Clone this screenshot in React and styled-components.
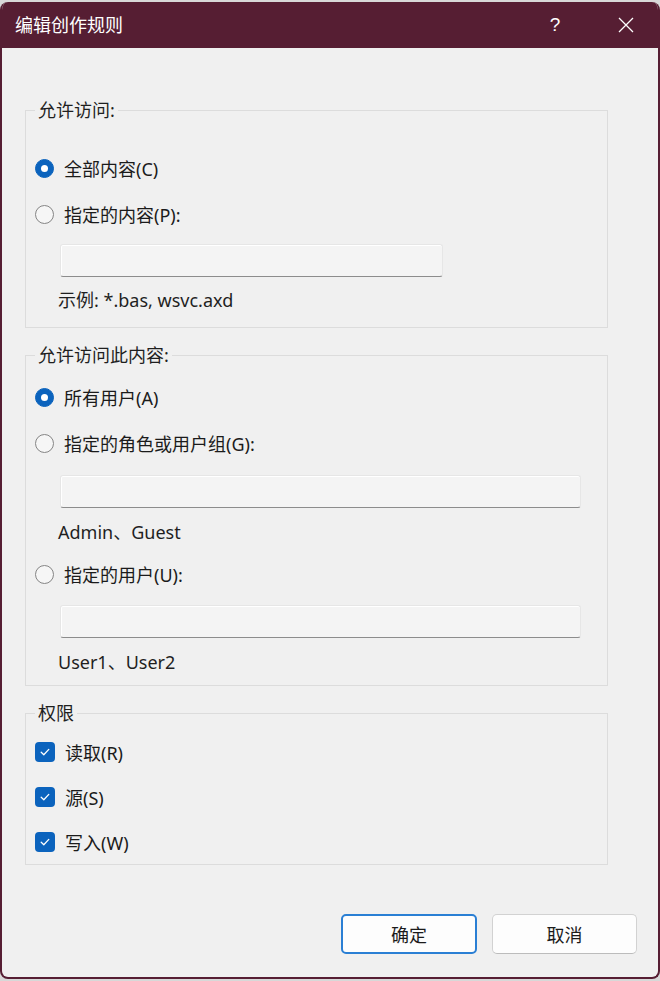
import styled, { createGlobalStyle } from 'styled-components';

const GlobalStyle = createGlobalStyle`
  html, body {
    margin: 0;
    padding: 0;
    background: #d8d8d8;
  }
  body {
    font-family: "Noto Sans", "Noto Sans CJK SC", sans-serif;
    color: #1b1b1b;
  }
`;

const Window = styled.div`
  box-sizing: border-box;
  width: 660px;
  height: 977px;
  margin-top: 2px;
  background: #f0f0f0;
  border: 2px solid #561e33;
  border-top: none;
  border-radius: 8px;
  overflow: hidden;
  display: flex;
  flex-direction: column;
`;

const TitleBar = styled.div`
  height: 46px;
  flex-shrink: 0;
  background: #561e33;
  color: #fff;
  display: flex;
  align-items: center;
  padding-left: 13px;
`;

const Title = styled.div`
  flex: 1;
  font-size: 18px;
  line-height: 24px;
`;

const TitleButton = styled.div`
  width: ${p => p.$w}px;
  height: 46px;
  display: flex;
  align-items: center;
  justify-content: center;
  font-family: "Liberation Sans", sans-serif;
  font-size: 19px;
  font-weight: 300;
`;

const Body = styled.div`
  flex: 1;
  padding: 52px 50px 0 23px;
  display: flex;
  flex-direction: column;
`;

const Group = styled.fieldset`
  margin: ${p => p.$mt || 0}px 0 0 0;
  padding: ${p => p.$pt}px 0 ${p => p.$pb}px 9px;
  border: 1px solid #dcdcdc;
  min-width: 0;
`;

const Legend = styled.legend`
  padding: 0 3px;
  font-size: 18px;
  line-height: 20px;
  color: #1f1f1f;
`;

const Row = styled.label`
  display: flex;
  align-items: center;
  gap: 10px;
  height: 24px;
  margin-top: ${p => p.$mt || 0}px;
  font-size: 18px;
`;

const Radio = styled.span`
  box-sizing: border-box;
  width: 19px;
  height: 19px;
  border-radius: 50%;
  flex-shrink: 0;
  display: flex;
  align-items: center;
  justify-content: center;
  background: ${p => (p.$checked ? '#0b63bd' : '#f6f6f6')};
  border: 1px solid ${p => (p.$checked ? '#0b63bd' : '#858585')};
  &::after {
    content: '';
    width: 7px;
    height: 7px;
    border-radius: 50%;
    background: #fff;
    display: ${p => (p.$checked ? 'block' : 'none')};
  }
`;

const Check = styled.span`
  width: 20px;
  height: 20px;
  border-radius: 4px;
  background: #0b63bd;
  flex-shrink: 0;
  display: flex;
  align-items: center;
  justify-content: center;
`;

const TextBox = styled.div`
  box-sizing: border-box;
  margin: ${p => p.$mt}px 0 0 25px;
  width: ${p => p.$w}px;
  height: 33px;
  background: #f4f4f4;
  border: 1px solid #e6e6e6;
  border-bottom: 1px solid #8c8c8c;
  border-radius: 3px;
  box-shadow: inset 0 1px 0 #fff, inset 1px 0 0 #fff;
`;

const Hint = styled.div`
  margin: ${p => p.$mt}px 0 0 23px;
  font-size: 18px;
  line-height: 20px;
  color: #1f1f1f;
`;

const Buttons = styled.div`
  margin: 49px -29px 0 0;
  display: flex;
  justify-content: flex-end;
  gap: 15px;
`;

const Button = styled.button`
  box-sizing: border-box;
  width: ${p => p.$w}px;
  height: 40px;
  border-radius: 5px;
  background: #fdfdfd;
  font-family: "Noto Sans", "Noto Sans CJK SC", sans-serif;
  font-size: 18px;
  color: #1b1b1b;
  border: ${p => (p.$primary ? '2px solid #2a7fd4' : '1px solid #d2d2d2')};
  border-bottom-color: ${p => (p.$primary ? '#2a7fd4' : '#bcbcbc')};
  padding: 0;
`;

const CloseIcon = () => (
  <svg width="16" height="16" viewBox="0 0 16 16">
    <path d="M1 1L15 15M15 1L1 15" stroke="#fff" strokeWidth="1.3" fill="none" />
  </svg>
);

const Tick = () => (
  <svg width="12" height="12" viewBox="0 0 12 12">
    <path d="M2.2 6.3L4.8 8.8L9.8 3.4" stroke="#fff" strokeWidth="1.3" fill="none" strokeLinecap="round" strokeLinejoin="round" />
  </svg>
);

export default function App() {
  return (
    <>
      <GlobalStyle />
      <Window>
        <TitleBar>
          <Title>编辑创作规则</Title>
          <TitleButton $w={78}>?</TitleButton>
          <TitleButton $w={64}><CloseIcon /></TitleButton>
        </TitleBar>
        <Body>
          <Group $pt={36} $pb={17}>
            <Legend>允许访问:</Legend>
            <Row><Radio $checked />全部内容(C)</Row>
            <Row $mt={22}><Radio />指定的内容(P):</Row>
            <TextBox $mt={18} $w={383} />
            <Hint $mt={13}>示例: *.bas, wsvc.axd</Hint>
          </Group>

          <Group $mt={17} $pt={20} $pb={13}>
            <Legend>允许访问此内容:</Legend>
            <Row><Radio $checked />所有用户(A)</Row>
            <Row $mt={22}><Radio />指定的角色或用户组(G):</Row>
            <TextBox $mt={20} $w={521} />
            <Hint $mt={14}>Admin、Guest</Hint>
            <Row $mt={20}><Radio />指定的用户(U):</Row>
            <TextBox $mt={19} $w={521} />
            <Hint $mt={14}>User1、User2</Hint>
          </Group>

          <Group $mt={17} $pt={17} $pb={10}>
            <Legend>权限</Legend>
            <Row><Check><Tick /></Check>读取(R)</Row>
            <Row $mt={21}><Check><Tick /></Check>源(S)</Row>
            <Row $mt={21}><Check><Tick /></Check>写入(W)</Row>
          </Group>

          <Buttons>
            <Button $primary $w={136}>确定</Button>
            <Button $w={145}>取消</Button>
          </Buttons>
        </Body>
      </Window>
    </>
  );
}
